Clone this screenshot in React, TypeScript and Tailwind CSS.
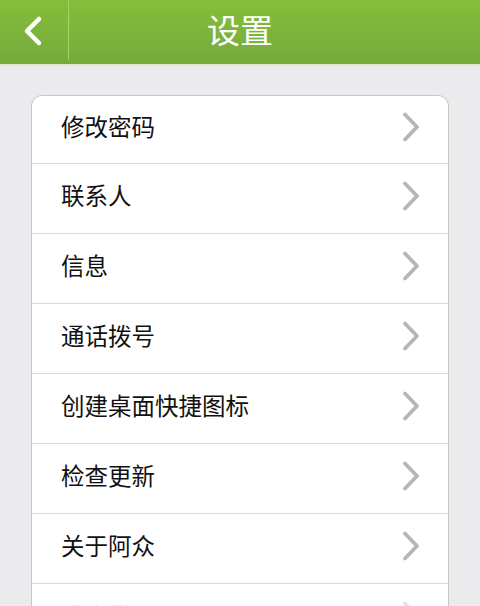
import React from "react";

const items = ["修改密码", "联系人", "信息", "通话拨号", "创建桌面快捷图标", "检查更新", "关于阿众", "退出登录"];

function Chevron({ color }: { color: string }) {
  return (
    <svg width="18" height="30" viewBox="0 0 18 30" fill="none">
      <path d="M3 2.5 L15 15 L3 27.5" stroke={color} strokeWidth="3.8" strokeLinecap="round" strokeLinejoin="round" />
    </svg>
  );
}

export default function App() {
  return (
    <div
      className="w-[480px] h-[606px] overflow-hidden bg-[#ebebed]"
      style={{ fontFamily: '"Noto Sans CJK SC", "Noto Sans", sans-serif' }}
    >
      <div className="h-[64px] bg-gradient-to-b from-[#84bf3a] to-[#76aa3d] flex items-stretch relative">
        <div className="w-[69px] flex items-center justify-center border-r border-[#a3d660] mb-[4px]">
          <svg width="22" height="32" viewBox="0 0 22 32" fill="none" className="mr-[2px] mt-[2px]">
            <path d="M17 4 L5 16 L17 28" stroke="white" strokeWidth="4.5" strokeLinecap="round" strokeLinejoin="round" />
          </svg>
        </div>
        <div className="absolute inset-0 flex items-center justify-center pointer-events-none">
          <span className="text-white text-[33px] leading-none pb-[6px]">设置</span>
        </div>
      </div>
      <div className="h-[2px] bg-[#dcebcc]" />
      <div className="px-[31px] pt-[29px]">
        <div className="bg-white border border-[#c6c6c6] rounded-t-[11px] overflow-hidden">
          {items.map((t, i) => (
            <div
              key={t}
              className="h-[70px] flex items-center justify-between pl-[29px] pr-[28px] pb-[6px] border-b border-[#d9d9d9]"
              style={i === 0 ? { height: 68 } : undefined}
            >
              <span className={`text-[23.5px] leading-none ${i === 7 ? "text-[#ececec]" : "text-[#111]"}`}>{t}</span>
              <Chevron color={i === 7 ? "#e4e4e4" : "#b6b6b6"} />
            </div>
          ))}
        </div>
      </div>
    </div>
  );
}
